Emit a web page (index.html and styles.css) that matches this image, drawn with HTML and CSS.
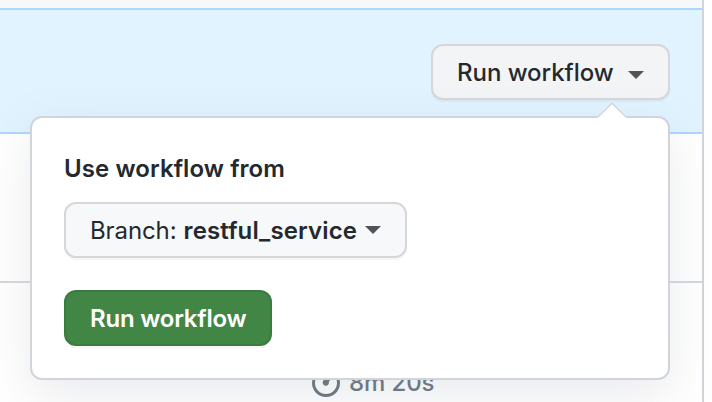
FILE: index.html
```html
<!DOCTYPE html>
<html lang="en">
<head>
<meta charset="utf-8">
<title>Run workflow</title>
<link rel="stylesheet" href="styles.css">
</head>
<body>
<main class="runs">
  <div class="runs-header"></div>
  <section class="dispatch">
    <button class="btn btn-open"><span class="label-run">Run workflow</span><span class="caret"></span></button>
    <div class="popover">
      <svg class="pointer" width="32" height="16" viewBox="0 0 32 16"><path d="M1.5 16 16 1.5 30.5 16Z" fill="#fff"/><path d="M2.5 14.5 16 1.2 29.5 14.5" fill="none" stroke="#d0d5dc" stroke-width="1.2"/></svg>
      <h2 class="title">Use workflow from</h2>
      <button class="btn btn-branch"><span class="label-branch">Branch:</span><strong class="branch-name">restful_service</strong><span class="caret"></span></button>
      <button class="btn btn-primary"><span class="label-run">Run workflow</span></button>
    </div>
  </section>
  <div class="run-row"></div>
  <div class="run-row run-last">
    <div class="duration">
      <svg width="28" height="28" viewBox="0 0 28 28" fill="none" stroke="#6a737d"><circle cx="14" cy="14" r="12.5" stroke-width="3"/><path d="m14 13.4 5-6" stroke-width="3.4" stroke-linecap="round"/><circle cx="13.8" cy="13.6" r="3.1" fill="#6a737d" stroke="none"/></svg>
      <span>8m 20s</span>
    </div>
  </div>
</main>
</body>
</html>
```
FILE: styles.css
```css
* { box-sizing: border-box; }
body {
  margin: 0;
  height: 402px;
  overflow: hidden;
  background: #fff;
  color: #24292e;
  font-family: Inter, "Liberation Sans", sans-serif;
  font-size: 24px;
}
.runs {
  width: 704px;
  height: 402px;
  border-right: 2px solid #d1d5da;
}
.runs-header { height: 8px; background: #f6f8fa; }
.dispatch {
  position: relative;
  display: flex;
  justify-content: flex-end;
  height: 126px;
  padding: 34px 32px 0 0;
  border-top: 2px solid #add6ff;
  border-bottom: 2px solid #add6ff;
  background: #e0f3ff;
}
.btn {
  display: flex;
  align-items: center;
  height: 56px;
  padding: 2px 24px 0;
  border: 2px solid #d5d7da;
  border-radius: 12px;
  background: #f6f8fa;
  box-shadow: 0 2px 0 rgba(27, 31, 35, .04);
  color: #24292e;
  font: inherit;
  font-weight: 500;
  line-height: 30px;
  white-space: nowrap;
}
.btn-open { width: 239px; background: #f3f4f6; }
.label-run { letter-spacing: -.04px; }
.caret {
  border: 8px solid transparent;
  border-top-color: #505459;
  border-bottom: 0;
}
.btn-open .caret { margin: 3px 0 0 14px; }
.popover {
  position: absolute;
  z-index: 1;
  top: 106px;
  left: 30px;
  width: 640px;
  height: 264px;
  padding: 35px 32px 33px;
  border: 2px solid #d1d5da;
  border-radius: 12px;
  background: #fff;
  box-shadow: 0 16px 48px rgba(149, 157, 165, .2);
}
.pointer { position: absolute; top: -16px; right: 40px; }
.title {
  margin: 0 0 17px;
  height: 32px;
  font-size: 24px;
  font-weight: 600;
  letter-spacing: .08px;
  line-height: 32px;
}
.btn-branch { width: 343px; font-weight: 400; }
.label-branch { letter-spacing: -.1px; }
.branch-name { margin-left: 7px; font-weight: 600; letter-spacing: .12px; }
.btn-branch .caret { margin: -2px 0 0 8px; }
.btn-primary {
  width: 208px;
  margin-top: 32px;
  border-color: #3c7b40;
  background: #428646;
  color: #fff;
  font-weight: 600;
}
.btn-primary .label-run { letter-spacing: -.22px; }
.run-row { height: 149px; border-bottom: 2px solid #d5d8dc; }
.run-last { height: 119px; padding: 86px 0 0 312px; border: 0; }
.duration {
  display: flex;
  align-items: center;
  gap: 9px;
  height: 28px;
  color: #6a737d;
  letter-spacing: -.1px;
  font-weight: 500;
  line-height: 28px;
}
```
